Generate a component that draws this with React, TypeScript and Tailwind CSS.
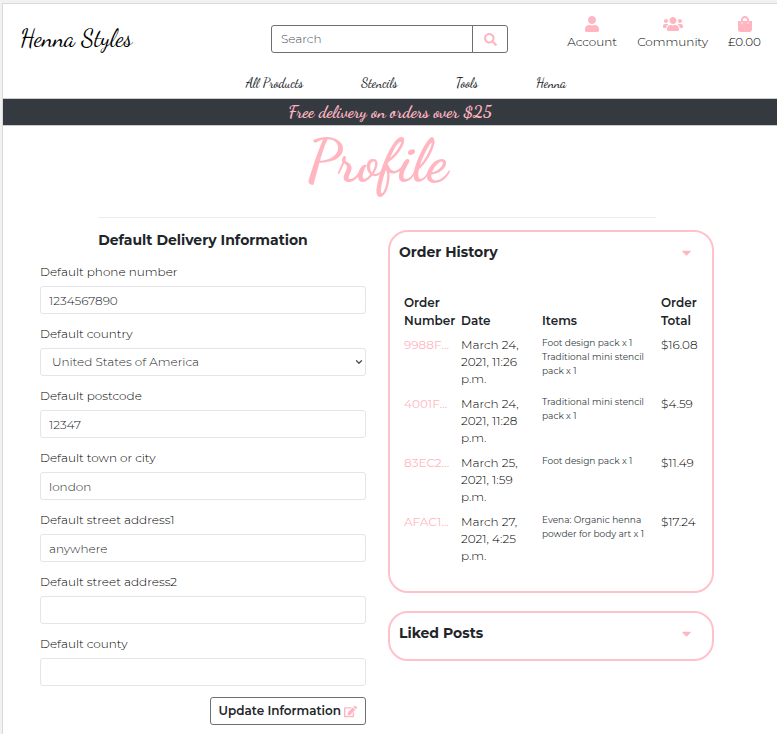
import React from "react";
import { ChevronDown } from "lucide-react";
import { FaCaretDown, FaEdit, FaSearch, FaShoppingBag, FaUser, FaUsers } from "react-icons/fa";

const script = "font-['Dancing_Script','Liberation_Serif',cursive]";

const navLinks = ["All Products", "Stencils", "Tools", "Henna"];

const accountLinks = [
  { label: "Account", Icon: FaUser },
  { label: "Community", Icon: FaUsers },
  { label: "£0.00", Icon: FaShoppingBag },
];

const fieldsAfterCountry = [
  { id: "postcode", label: "Default postcode", value: "12347" },
  { id: "town", label: "Default town or city", value: "london" },
  { id: "street1", label: "Default street address1", value: "anywhere" },
  { id: "street2", label: "Default street address2", value: "" },
  { id: "county", label: "Default county", value: "" },
];

const orders = [
  { id: "9988F...", date: "March 24, 2021, 11:26 p.m.", items: ["Foot design pack x 1", "Traditional mini stencil pack x 1"], total: "$16.08" },
  { id: "4001F...", date: "March 24, 2021, 11:28 p.m.", items: ["Traditional mini stencil pack x 1"], total: "$4.59" },
  { id: "83EC2...", date: "March 25, 2021, 1:59 p.m.", items: ["Foot design pack x 1"], total: "$11.49" },
  { id: "AFAC1...", date: "March 27, 2021, 4:25 p.m.", items: ["Evena: Organic henna powder for body art x 1"], total: "$17.24" },
];

function Field({ id, label, value }: { id: string; label: string; value: string }) {
  return (
    <div className="mb-[11px]">
      <label htmlFor={id} className="mb-[5px] block leading-[18px]">
        {label}
      </label>
      <input
        id={id}
        type="text"
        defaultValue={value}
        className="block h-7 w-full rounded-[3px] border border-[#e3e5ea] bg-white px-2 text-[#212529]"
      />
    </div>
  );
}

function Header() {
  return (
    <header className="h-[94px]">
      <div className="grid grid-cols-[1fr_237px_1fr] items-start pr-px">
        <a href="#" className={`${script} mt-[19px] ml-[17px] text-[24px] leading-8 font-normal text-black`}>
          Henna Styles
        </a>
        <form className="mt-[21px] flex h-7" onSubmit={(e) => e.preventDefault()}>
          <input
            type="search"
            aria-label="Search"
            placeholder="Search"
            className="min-w-0 flex-1 rounded-l-[3px] border border-[#6c6f73] px-[9px] placeholder:text-[#495057]"
          />
          <button
            type="submit"
            aria-label="Submit search"
            className="-ml-px flex w-9 items-center justify-center rounded-r-[3px] border border-[#6c6f73] text-[#ffb6c1]"
          >
            <FaSearch size={13} />
          </button>
        </form>
        <nav aria-label="Account" className="mt-3 mr-[15px] flex justify-end gap-5">
          {accountLinks.map(({ label, Icon }) => (
            <a key={label} href="#" className="flex flex-col items-center leading-[18px]">
              <Icon className="h-4 w-5 text-[#ffb6c1]" />
              <span className="mt-px">{label}</span>
            </a>
          ))}
        </nav>
      </div>
      <nav aria-label="Shop" className="mt-5 flex justify-center gap-[58px] pl-8">
        {navLinks.map((link) => (
          <a key={link} href="#" className={`${script} text-[13px] leading-4 font-medium text-[#212529]`}>
            {link}
          </a>
        ))}
      </nav>
    </header>
  );
}

function DeliveryForm() {
  return (
    <form onSubmit={(e) => e.preventDefault()}>
      <h2 className="mb-[13px] text-center text-sm leading-5 font-bold text-[#212529]">
        Default Delivery Information
      </h2>
      <Field id="phone" label="Default phone number" value="1234567890" />
      <div className="mb-[11px]">
        <label htmlFor="country" className="mb-[5px] block leading-[18px]">
          Default country
        </label>
        <div className="relative">
          <select
            id="country"
            defaultValue="US"
            className="block h-7 w-full appearance-none rounded-[3px] border border-[#e3e5ea] bg-white px-[11px] text-[#212529]"
          >
            <option value="US">United States of America</option>
            <option value="GB">United Kingdom</option>
          </select>
          <ChevronDown
            size={10}
            strokeWidth={3}
            className="pointer-events-none absolute top-[9px] right-[2px] text-[#495057]"
          />
        </div>
      </div>
      {fieldsAfterCountry.map((field) => (
        <Field key={field.id} {...field} />
      ))}
      <div className="flex justify-end">
        <button
          type="submit"
          className="flex h-7 items-center gap-[3px] rounded-[3px] border border-[#6c6f73] px-2 font-semibold text-[#212529]"
        >
          Update Information
          <FaEdit size={13} className="text-[#ffb6c1]" />
        </button>
      </div>
    </form>
  );
}

function Panel({ title, children }: { title: string; children?: React.ReactNode }) {
  return (
    <section className="rounded-[20px] border-2 border-[#ffc2cb] px-[9px] pt-[10px] pb-4">
      <button type="button" className="flex w-full items-center justify-between pr-[9px] text-left">
        <span className="text-sm leading-5 font-bold text-[#212529]">{title}</span>
        <FaCaretDown size={15} className="text-[#ffb6c1]" />
      </button>
      {children}
    </section>
  );
}

function OrderTable() {
  return (
    <table className="mt-8 mb-[3px] ml-[5px] w-[299px] table-fixed">
      <colgroup>
        <col className="w-[57px]" />
        <col className="w-[81px]" />
        <col className="w-[119px]" />
        <col />
      </colgroup>
      <thead>
        <tr className="text-left align-bottom leading-[18px] text-[#212529]">
          <th className="pb-[6px] font-semibold">Order Number</th>
          <th className="pb-[6px] font-semibold">Date</th>
          <th className="pb-[6px] font-semibold">Items</th>
          <th className="pb-[6px] font-semibold">Order Total</th>
        </tr>
      </thead>
      <tbody>
        {orders.map((order) => (
          <tr key={order.id} className="align-top leading-[17px]">
            <td className="pb-2">
              <a href="#" className="font-normal text-[#ffb6c1]">
                {order.id}
              </a>
            </td>
            <td className="pr-4 pb-2">{order.date}</td>
            <td className="pr-2 pb-2">
              <ul className="text-[9px] leading-[14px] font-normal text-[#343a40]">
                {order.items.map((item) => (
                  <li key={item}>{item}</li>
                ))}
              </ul>
            </td>
            <td className="pb-2">{order.total}</td>
          </tr>
        ))}
      </tbody>
    </table>
  );
}

export default function App() {
  return (
    <div className="min-h-screen bg-[#f1f1f1] pt-[3px] pl-[2px] font-[Montserrat,Inter,sans-serif] text-xs font-light text-black">
      <div className="min-h-[731px] border-t border-l border-[#d9d9d9] bg-white">
        <Header />
        <p className={`${script} h-7 border-y border-[#c8cacc] bg-[#343a40] text-center text-[17px] leading-[26px] font-bold text-[#ffb6c1]`}>
          Free delivery on orders over $25
        </p>
        <main className="pr-[63px] pl-[37px]">
          <h1 className={`${script} text-center text-[58px] leading-[72px] font-bold text-[#ffb6c1]`}>Profile</h1>
          <hr className="mx-[58px] mt-[19px] border-[#ececec]" />
          <div className="mt-3 grid grid-cols-2 items-start gap-[22px]">
            <DeliveryForm />
            <div className="flex flex-col gap-[18px]">
              <Panel title="Order History">
                <OrderTable />
              </Panel>
              <Panel title="Liked Posts" />
            </div>
          </div>
        </main>
      </div>
    </div>
  );
}
